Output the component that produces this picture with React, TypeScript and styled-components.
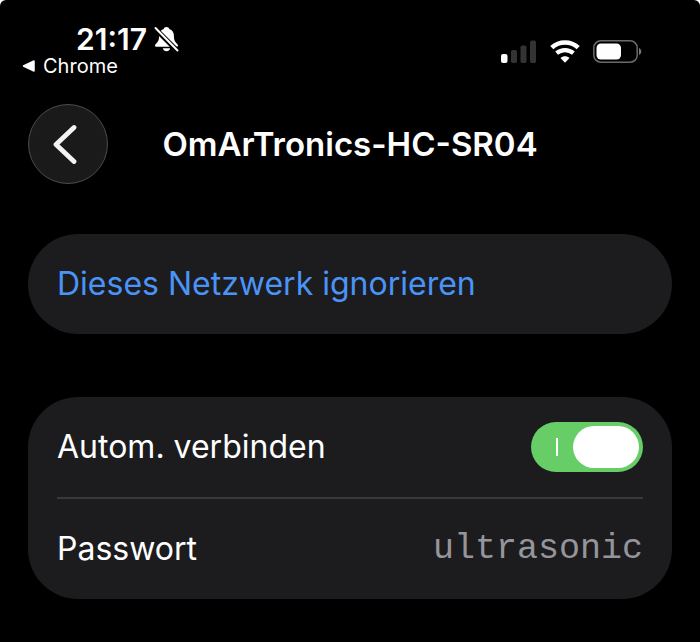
import React, { useState } from 'react';
import styled, { createGlobalStyle, ThemeProvider } from 'styled-components';

const theme = {
  colors: {
    page: '#000000',
    card: '#1c1c1e',
    text: '#ffffff',
    link: '#4a94f8',
    muted: '#96959b',
    line: '#38383a',
    green: '#67ce67',
  },
  fonts: {
    body: "'Inter', 'Liberation Sans', sans-serif",
    mono: "'Liberation Mono', monospace",
  },
};

const GlobalStyle = createGlobalStyle`
  * {
    box-sizing: border-box;
  }

  html {
    background: #ffffff;
  }

  body {
    margin: 0;
    font-family: ${theme.fonts.body};
    color: ${theme.colors.text};
  }

  button {
    font: inherit;
    cursor: pointer;
  }
`;

const Screen = styled.div`
  min-height: 100vh;
  padding: 24px 28px 42px;
  border-radius: 6px 6px 0 0;
  background: ${({ theme }) => theme.colors.page};
`;

const StatusBar = styled.header`
  display: flex;
  justify-content: space-between;
`;

const StatusLeft = styled.div`
  display: flex;
  flex-direction: column;
`;

const Clock = styled.div`
  display: flex;
  align-items: center;
  gap: 7px;
  padding-left: 48px;
  font-size: 30px;
  font-weight: 600;
  line-height: 30px;
`;

const BackToApp = styled.a`
  display: flex;
  align-items: center;
  gap: 8px;
  margin-left: -6px;
  color: inherit;
  font-size: 20px;
  line-height: 24px;
  text-decoration: none;
`;

const StatusIcons = styled.div`
  display: flex;
  align-items: center;
  gap: 13px;
  padding-right: 30px;
`;

const TitleBar = styled.div`
  display: grid;
  grid-template-columns: 80px 1fr 80px;
  align-items: center;
  margin-top: 26px;
`;

const BackButton = styled.button`
  display: flex;
  align-items: center;
  justify-content: center;
  height: 80px;
  padding: 0 6px 0 0;
  border: 1px solid #4c4c4e;
  border-radius: 50%;
  background: #1a1a1b;
  color: inherit;
`;

const Title = styled.h1`
  margin: 0;
  font-size: 33px;
  font-weight: 600;
  line-height: 40px;
  text-align: center;
  white-space: nowrap;
`;

const Card = styled.section<{ $gap: number }>`
  margin-top: ${({ $gap }) => $gap}px;
  padding: 0 29px;
  border-radius: 50px;
  background: ${({ theme }) => theme.colors.card};
`;

const Row = styled.div`
  box-sizing: content-box;
  display: flex;
  align-items: center;
  justify-content: space-between;
  min-height: 100px;
  font-size: 32px;
  line-height: 40px;

  & + & {
    border-top: 2px solid ${({ theme }) => theme.colors.line};
  }
`;

const LinkButton = styled.button`
  padding: 0;
  border: 0;
  background: none;
  color: ${({ theme }) => theme.colors.link};
`;

const Password = styled.output`
  color: ${({ theme }) => theme.colors.muted};
  font-family: ${({ theme }) => theme.fonts.mono};
  font-size: 35px;
`;

const Switch = styled.input`
  appearance: none;
  display: flex;
  align-items: center;
  justify-content: space-between;
  width: 112px;
  height: 50px;
  margin: 0;
  padding: 0 4px 0 25px;
  border-radius: 25px;
  background: #39393d;
  cursor: pointer;

  &::before {
    content: '';
    width: 2px;
    height: 18px;
    background: #ffffff;
  }

  &::after {
    content: '';
    width: 66px;
    height: 42px;
    border-radius: 21px;
    background: #ffffff;
  }

  &:checked {
    background: ${({ theme }) => theme.colors.green};
  }

  &:not(:checked) {
    flex-direction: row-reverse;
    padding: 0 25px 0 4px;
  }
`;

const BellOffIcon = () => (
  <svg width="25" height="26" viewBox="0 0 25 26" aria-label="Stumm">
    <path
      d="M12.5 1c-1.6 0-2.6.9-2.8 2.1C6.6 4 5.2 6.5 5.1 9.5c-.1 4.800-.9 6.200-3.500 8.700-1.300 1.300-.6 2.600.9 2.600h20c1.500 0 2.200-1.300.9-2.600-2.600-2.500-3.400-3.900-3.500-8.700-.1-3-1.500-5.500-4.600-6.400C15.100 1.900 14.100 1 12.500 1z"
      fill="#fff"
    />
    <path d="M8.800 22.300h7.400c-.4 1.900-1.900 3-3.700 3s-3.300-1.100-3.700-3z" fill="#fff" />
    <path d="M0 1.500 24 25.500" stroke="#000" strokeWidth="5" />
    <path d="M1.500 2 23.500 24.500" stroke="#fff" strokeWidth="2" strokeLinecap="round" />
  </svg>
);

const SignalIcon = () => (
  <svg width="36" height="23" viewBox="0 0 36 23" aria-label="Mobilfunk">
    <rect x="0" y="14" width="6.500" height="9" rx="2" fill="#fff" />
    <rect x="10" y="10" width="6" height="13" rx="1.800" fill="#333" />
    <rect x="19.500" y="5.500" width="6" height="17.500" rx="1.800" fill="#333" />
    <rect x="29" y="0.500" width="6" height="22.500" rx="1.800" fill="#333" />
  </svg>
);

const WifiIcon = () => (
  <svg width="30" height="23" viewBox="0 0 30 23" aria-label="WLAN">
    <path d="M1.800 7.600C9.200.8 20.800.8 28.200 7.600" fill="none" stroke="#fff" strokeWidth="4.600" />
    <path d="M6.600 13.200c4.800-4.200 12-4.200 16.800 0" fill="none" stroke="#fff" strokeWidth="4.200" />
    <path d="M15 22.700 10.500 18c2.500-2.500 6.500-2.500 9 0z" fill="#fff" />
  </svg>
);

const BatteryIcon = () => (
  <svg width="49" height="23" viewBox="0 0 49 23" aria-label="Batterie">
    <rect x="0.800" y="0.800" width="43.400" height="21.400" rx="7" fill="none" stroke="#6a6a6a" strokeWidth="1.500" />
    <rect x="3.500" y="3.500" width="24.500" height="16" rx="4.500" fill="#fff" />
    <path d="M46 8c3 1.200 3 5.800 0 7z" fill="#777" />
  </svg>
);

const App: React.FC = () => {
  const [autoJoin, setAutoJoin] = useState(true);

  return (
    <ThemeProvider theme={theme}>
      <GlobalStyle />
      <Screen>
        <StatusBar>
          <StatusLeft>
            <Clock>
              <span>21:17</span>
              <BellOffIcon />
            </Clock>
            <BackToApp href="#chrome">
              <svg width="13" height="14" viewBox="0 0 13 14" aria-hidden="true">
                <path d="M12 2v10L1.500 7z" fill="#fff" stroke="#fff" strokeWidth="1.500" strokeLinejoin="round" />
              </svg>
              Chrome
            </BackToApp>
          </StatusLeft>
          <StatusIcons>
            <SignalIcon />
            <WifiIcon />
            <BatteryIcon />
          </StatusIcons>
        </StatusBar>

        <TitleBar>
          <BackButton type="button" aria-label="Zurück">
            <svg width="26" height="40" viewBox="0 0 26 40" aria-hidden="true">
              <path
                d="M22 3.500 4 20.500l18 17"
                fill="none"
                stroke="#f4f4f4"
                strokeWidth="4.800"
                strokeLinecap="round"
                strokeLinejoin="round"
              />
            </svg>
          </BackButton>
          <Title>OmArTronics-HC-SR04</Title>
        </TitleBar>

        <main>
          <Card $gap={50}>
            <Row>
              <LinkButton type="button">Dieses Netzwerk ignorieren</LinkButton>
            </Row>
          </Card>

          <Card $gap={63}>
            <Row>
              <label htmlFor="auto-join">Autom. verbinden</label>
              <Switch
                id="auto-join"
                type="checkbox"
                role="switch"
                checked={autoJoin}
                onChange={(e) => setAutoJoin(e.target.checked)}
              />
            </Row>
            <Row>
              <label htmlFor="password">Passwort</label>
              <Password id="password">ultrasonic</Password>
            </Row>
          </Card>
        </main>
      </Screen>
    </ThemeProvider>
  );
};

export default App;
